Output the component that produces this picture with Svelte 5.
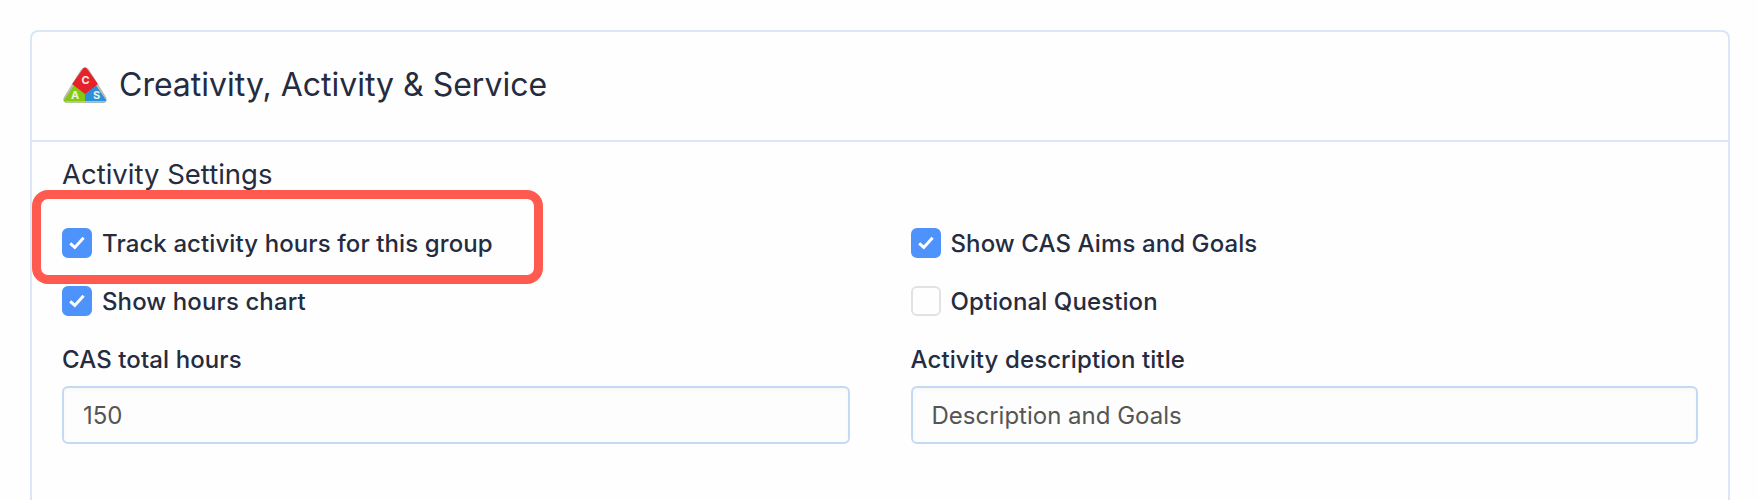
<script>
  const left = [
    { label: 'Track activity hours for this group', checked: true },
    { label: 'Show hours chart', checked: true }
  ];
  const right = [
    { label: 'Show CAS Aims and Goals', checked: true },
    { label: 'Optional Question', checked: false }
  ];
  const fields = [
    { label: 'CAS total hours', value: '150' },
    { label: 'Activity description title', value: 'Description and Goals' }
  ];
  const rows = [0, 1].flatMap((i) => [left[i], right[i]]);
</script>

<div class="page">
  <section class="card">
    <header class="head">
      <svg class="logo" width="46" height="38" viewBox="0 0 46 38" aria-hidden="true">
        <defs>
          <clipPath id="tri"><path d="M23 1.5 C25 1.5 26.5 2.8 27.5 4.3 L44 31 C45.6 33.8 44.4 36.5 41 36.5 L5 36.5 C1.6 36.5 .4 33.8 2 31 L18.5 4.3 C19.5 2.8 21 1.5 23 1.5 Z" /></clipPath>
        </defs>
        <g clip-path="url(#tri)">
          <rect width="46" height="38" fill="#b9bdb6" />
          <path d="M0 37 L15 15 L23 27 L23 37 Z" fill="#84c80f" />
          <path d="M46 37 L31 15 L23 27 L23 37 Z" fill="#2b90d9" />
          <path d="M23 0 L36 18 L23 28 L10 18 Z" fill="#e8202a" />
          <rect y="35" width="46" height="3" fill="#b9bdb6" />
        </g>
        <text x="23.5" y="18" class="tx">C</text>
        <text x="13" y="33" class="tx">A</text>
        <text x="34.5" y="33" class="tx">S</text>
      </svg>
      <h1>Creativity, Activity &amp; Service</h1>
    </header>
    <div class="body">
      <h2>Activity Settings</h2>
      <div class="checks">
        {#each rows as row}
          <label class="check">
            <span class="box" class:on={row.checked}>
              {#if row.checked}
                <svg width="18" height="18" viewBox="0 0 18 18" aria-hidden="true"><path d="M2.2 9.4 L6.8 13.4 L15.6 3.8" fill="none" stroke="#fff" stroke-width="3" /></svg>
              {/if}
            </span>
            <span>{row.label}</span>
          </label>
        {/each}
      </div>
      <div class="fields">
        {#each fields as f}
          <div class="field">
            <div class="flabel">{f.label}</div>
            <div class="input">{f.value}</div>
          </div>
        {/each}
      </div>
    </div>
    <div class="highlight"></div>
  </section>
</div>

<style>
  :global(body) { margin: 0; background: #fefefe; }
  :global(html) { overflow: hidden; }
  .page {
    height: 500px;
    overflow: hidden;
    padding: 30px 28px 0 30px;
    box-sizing: border-box;
    font-family: Inter, "Liberation Sans", sans-serif;
    color: #252c40;
  }
  .card {
    position: relative;
    border: 2px solid #d8e6f8;
    border-radius: 8px;
    background: #fefefe;
    min-height: 600px;
    box-sizing: border-box;
  }
  .head {
    height: 110px;
    box-sizing: border-box;
    border-bottom: 2px solid #d8e6f8;
    display: flex;
    align-items: center;
    gap: 10px;
    padding: 0 0 0 30px;
  }
  .logo { flex: none; margin-bottom: 2px; }
  .tx {
    font: 700 11px Inter, sans-serif;
    fill: #e8f4e0;
    text-anchor: middle;
  }
  h1 {
    margin: 0 0 2px 1px;
    font-size: 32px;
    font-weight: 400;
    line-height: 40px;
  }
  .body { padding: 16px 30px 0 30px; }
  h2 {
    margin: 0;
    font-size: 27.5px;
    font-weight: 400;
    line-height: 32px;
  }
  .checks {
    display: grid;
    grid-template-columns: 1fr 1fr;
    column-gap: 61px;
    row-gap: 28px;
    margin-top: 38px;
  }
  .check {
    display: flex;
    align-items: center;
    gap: 10px;
    height: 30px;
    font-size: 24px;
    font-weight: 500;
    letter-spacing: 0.1px;
  }
  .box {
    width: 30px;
    height: 30px;
    box-sizing: border-box;
    border-radius: 6px;
    border: 2px solid #e2e2e2;
    background: #fefefe;
    display: flex;
    align-items: center;
    justify-content: center;
    flex: none;
  }
  .box.on { background: #4e92fb; border-color: #4e92fb; }
  .fields {
    display: grid;
    grid-template-columns: 1fr 1fr;
    column-gap: 61px;
    margin-top: 29px;
  }
  .flabel {
    font-size: 24px;
    font-weight: 500;
    line-height: 30px;
    margin-bottom: 11px;
    letter-spacing: 0.1px;
  }
  .input {
    height: 58px;
    box-sizing: border-box;
    border: 2px solid #c6d9f4;
    border-radius: 6px;
    padding: 0 19px;
    display: flex;
    align-items: center;
    font-size: 24px;
    color: #555;
    background: #fdfdfd;
    box-shadow: inset 0 2px 4px rgba(0, 0, 0, 0.03);
  }
  .highlight {
    position: absolute;
    left: 0;
    top: 158px;
    width: 511px;
    height: 94px;
    box-sizing: border-box;
    border: 9px solid #ff5a4f;
    border-radius: 16px;
    pointer-events: none;
  }
</style>
